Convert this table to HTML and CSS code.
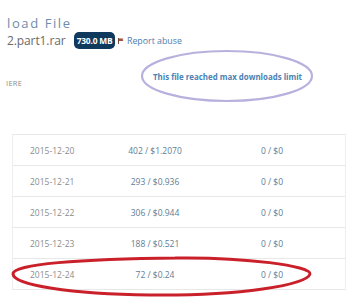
FILE: index.html
```html
<!DOCTYPE html>
<html>
<head>
<meta charset="utf-8">
<link rel="stylesheet" href="styles.css">
</head>
<body>
<div class="page">
  <header class="head">
    <h1 class="title">load File</h1>
    <div class="file-row">
      <span class="fname">2.part1.rar</span>
      <span class="badge">730.0 MB</span>
      <span class="flag"><svg width="6" height="6" viewBox="0 0 6 6"><rect x="0" y="0" width="1" height="6" fill="#7a4a3a"/><path d="M1 0.5H5.5L4.5 1.8L5.5 3.1H1Z" fill="#a0503a"/></svg></span>
      <a class="report">Report abuse</a>
    </div>
  </header>
  <div class="mid">
    <span class="here">IERE</span>
    <span class="limit">This file reached max downloads limit</span>
  </div>
  <div class="stats">
    <div class="row"><span class="date">2015-12-20</span><span class="num">402 / $1.2070</span><span class="num">0 / $0</span></div>
    <div class="row"><span class="date">2015-12-21</span><span class="num">293 / $0.936</span><span class="num">0 / $0</span></div>
    <div class="row"><span class="date">2015-12-22</span><span class="num">306 / $0.944</span><span class="num">0 / $0</span></div>
    <div class="row"><span class="date">2015-12-23</span><span class="num">188 / $0.521</span><span class="num">0 / $0</span></div>
    <div class="row"><span class="date">2015-12-24</span><span class="num">72 / $0.24</span><span class="num">0 / $0</span></div>
  </div>
  <svg class="marks" width="350" height="308" viewBox="0 0 350 308">
    <ellipse cx="227" cy="76" rx="85" ry="25" fill="none" stroke="#b9b1dd" stroke-width="2.2"/>
    <path d="M175 258 C245 257 312 266 310 274 C307 285 240 296 150 295 C70 294 14 285 13 274 C12 264 80 259 178 258" fill="none" stroke="#c9202a" stroke-width="3"/>
  </svg>
</div>
</body>
</html>
```
FILE: styles.css
```css
html, body {
  margin: 0;
  padding: 0;
  background: #ffffff;
}
body {
  font-family: "Open Sans", "DejaVu Sans", sans-serif;
  width: 350px;
  height: 308px;
  overflow: hidden;
}
.page {
  position: relative;
  width: 350px;
  height: 308px;
}
.head {
  padding: 14px 0 0 7px;
}
.title {
  margin: 0;
  font-size: 13px;
  line-height: normal;
  font-weight: 400;
  letter-spacing: 1.6px;
  color: #6f8cab;
}
.file-row {
  display: flex;
  align-items: center;
  height: 17px;
}
.fname {
  font-size: 12px;
  line-height: normal;
  letter-spacing: -0.1px;
  color: #6a6a6a;
  width: 67px;
}
.badge {
  height: 17px;
  width: 41px;
  box-sizing: border-box;
  border-radius: 5px;
  background: #0f3a5e;
  color: #ffffff;
  font-size: 8.4px;
  font-weight: 700;
  line-height: 17px;
  text-align: center;
  letter-spacing: -0.2px;
}
.flag {
  margin: 0 0 0 3px;
  display: flex;
}
.report {
  margin: 0 0 0 3px;
  font-size: 8.8px;
  line-height: 12px;
  color: #4c7cb0;
}
.mid {
  display: flex;
  align-items: center;
  height: 30px;
  margin-top: 19px;
}
.here {
  padding-left: 6px;
  font-size: 7.5px;
  color: #8a8a8a;
  width: 147px;
  letter-spacing: 0.3px;
}
.limit {
  font-size: 7.9px;
  font-weight: 700;
  color: #4a82b4;
  margin-top: -12px;
}
.stats {
  margin: 36px 0 0 12px;
  width: 332px;
  border-left: 1px solid #eeeeee;
  border-right: 1px solid #eeeeee;
  border-top: 1px solid #e8e8e8;
}
.row {
  display: grid;
  grid-template-columns: 87px 110px 124px 1fr;
  align-items: center;
  height: 30px;
  border-bottom: 1px solid #e8e8e8;
  font-size: 8.5px;
}
.date {
  padding-left: 17px;
  color: #8c8c8c;
}
.num {
  text-align: center;
  color: #5e7d95;
}
.marks {
  position: absolute;
  left: 0;
  top: 0;
  pointer-events: none;
}
```
